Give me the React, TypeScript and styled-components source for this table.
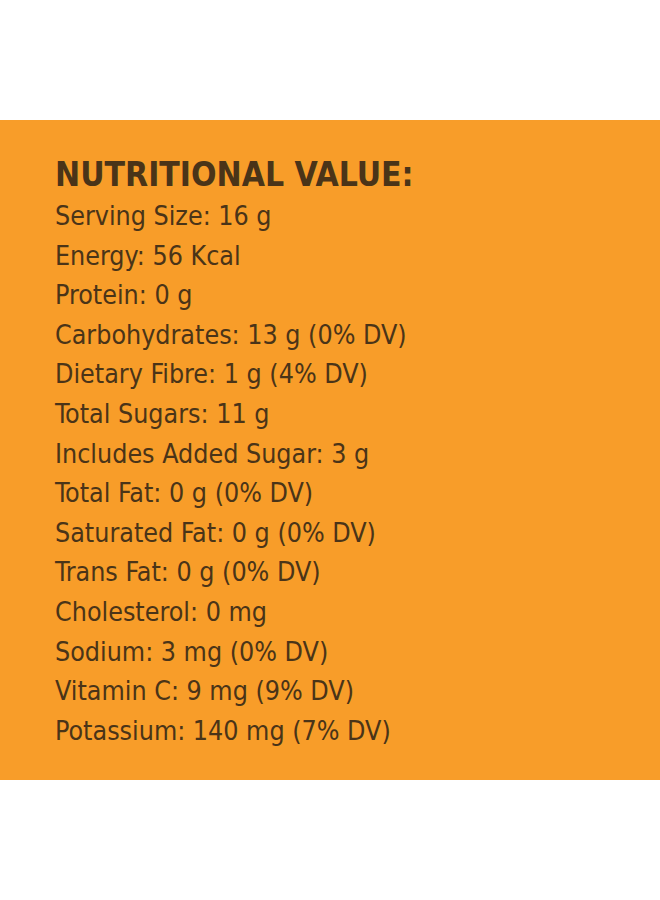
import React from "react";
import styled, { createGlobalStyle } from "styled-components";

const GlobalStyle = createGlobalStyle`
  html, body {
    margin: 0;
    padding: 0;
    background: #ffffff;
  }
`;

const Page = styled.div`
  width: 660px;
  height: 900px;
  display: flex;
  flex-direction: column;
  padding-top: 120px;
  box-sizing: border-box;
`;

const Band = styled.section`
  height: 660px;
  background: #f89d29;
  box-sizing: border-box;
  padding: 34px 0 0 55px;
  color: #4a3418;
  font-family: "DejaVu Sans Condensed", sans-serif;
`;

const Title = styled.h2`
  margin: 0;
  font-size: 33.4px;
  line-height: 42px;
  font-weight: 700;
`;

const List = styled.ul`
  list-style: none;
  margin: 0;
  padding: 0;
`;

const Item = styled.li`
  font-size: 26.6px;
  line-height: 39.6px;
`;

const facts = [
  "Serving Size: 16 g",
  "Energy: 56 Kcal",
  "Protein: 0 g",
  "Carbohydrates: 13 g (0% DV)",
  "Dietary Fibre: 1 g (4% DV)",
  "Total Sugars: 11 g",
  "Includes Added Sugar: 3 g",
  "Total Fat: 0 g (0% DV)",
  "Saturated Fat: 0 g (0% DV)",
  "Trans Fat: 0 g (0% DV)",
  "Cholesterol: 0 mg",
  "Sodium: 3 mg (0% DV)",
  "Vitamin C: 9 mg (9% DV)",
  "Potassium: 140 mg (7% DV)",
];

const App: React.FC = () => {
  return (
    <>
      <GlobalStyle />
      <Page>
        <Band>
          <Title>NUTRITIONAL VALUE:</Title>
          <List>
            {facts.map((f) => (
              <Item key={f}>{f}</Item>
            ))}
          </List>
        </Band>
      </Page>
    </>
  );
};

export default App;
